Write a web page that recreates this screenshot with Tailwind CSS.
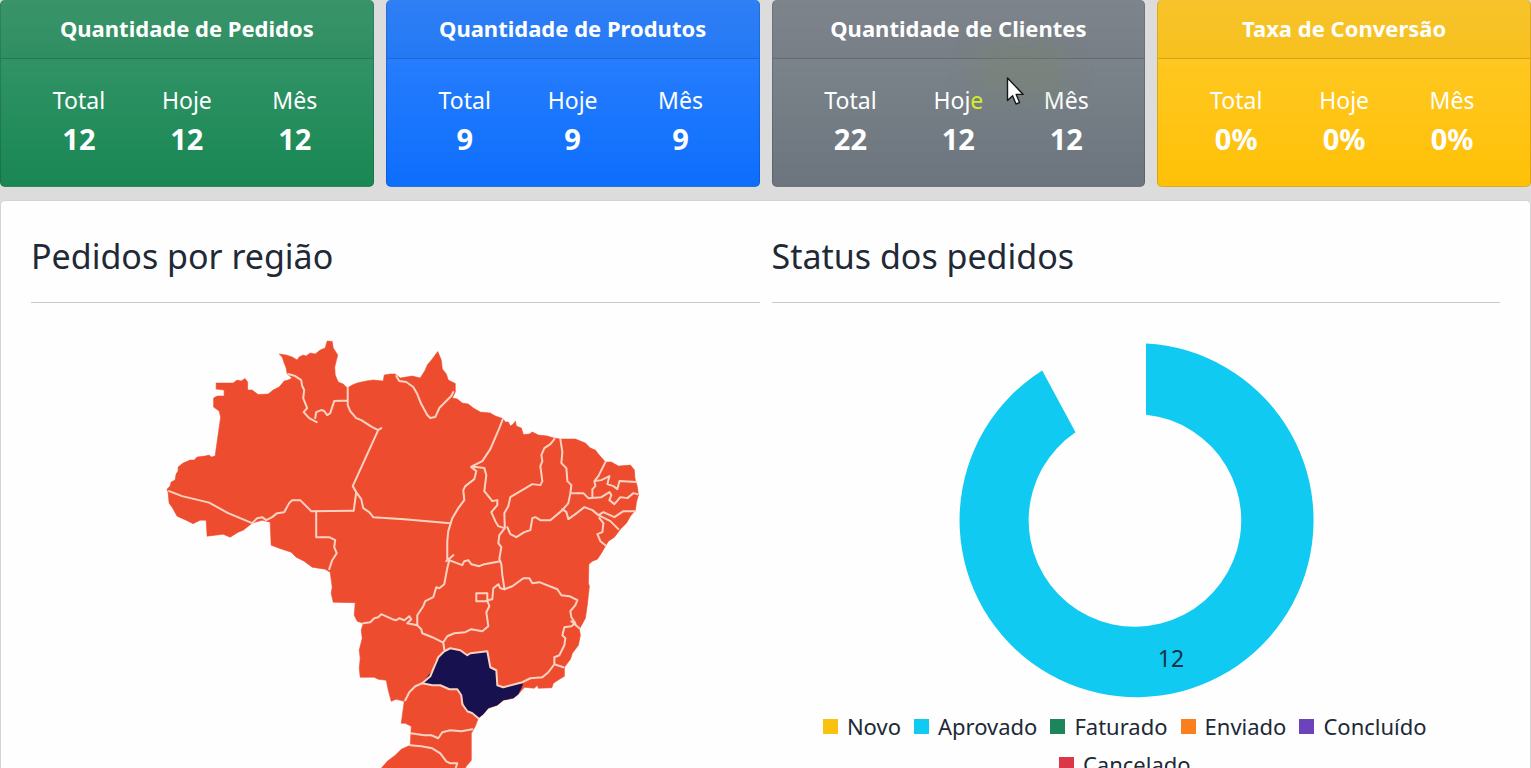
<!DOCTYPE html>
<html lang="pt-BR">
<head>
<meta charset="utf-8">
<title>Painel de pedidos</title>
<script src="https://cdn.jsdelivr.net/npm/@tailwindcss/browser@4"></script>
</head>
<body class="h-screen overflow-hidden bg-[#dcdcdd] font-['Noto_Sans',sans-serif] text-[#212936]">
<main class="relative">
  <section class="grid grid-cols-4 gap-3 text-white">
    <article class="h-[187px] rounded-[5px] border border-t-0 border-black/15 bg-[#198754] bg-linear-to-b from-white/15 to-transparent text-center">
      <h2 class="h-[59px] border-b border-black/15 bg-black/3 pt-3 text-[22px] leading-8 font-bold">Quantidade de Pedidos</h2>
      <dl class="grid grid-cols-3 px-6 pt-[25px]">
        <div><dt class="text-[23px] leading-8">Total</dt><dd class="text-[29px] leading-[46px] font-bold">12</dd></div>
        <div><dt class="text-[23px] leading-8">Hoje</dt><dd class="text-[29px] leading-[46px] font-bold">12</dd></div>
        <div><dt class="text-[23px] leading-8">Mês</dt><dd class="text-[29px] leading-[46px] font-bold">12</dd></div>
      </dl>
    </article>
    <article class="h-[187px] rounded-[5px] border border-t-0 border-black/15 bg-[#0d6efd] bg-linear-to-b from-white/15 to-transparent text-center">
      <h2 class="h-[59px] border-b border-black/15 bg-black/3 pt-3 text-[22px] leading-8 font-bold">Quantidade de Produtos</h2>
      <dl class="grid grid-cols-3 px-6 pt-[25px]">
        <div><dt class="text-[23px] leading-8">Total</dt><dd class="text-[29px] leading-[46px] font-bold">9</dd></div>
        <div><dt class="text-[23px] leading-8">Hoje</dt><dd class="text-[29px] leading-[46px] font-bold">9</dd></div>
        <div><dt class="text-[23px] leading-8">Mês</dt><dd class="text-[29px] leading-[46px] font-bold">9</dd></div>
      </dl>
    </article>
    <article class="relative h-[187px] rounded-[5px] border border-t-0 border-black/15 bg-[#6c757d] bg-linear-to-b from-white/15 to-transparent text-center">
      <div class="absolute top-11 left-[200px] h-14 w-24 rounded-full bg-[#7c8a50]/20 blur-md"></div>
      <h2 class="h-[59px] border-b border-black/15 bg-black/3 pt-3 text-[22px] leading-8 font-bold">Quantidade de Clientes</h2>
      <dl class="grid grid-cols-3 px-6 pt-[25px]">
        <div><dt class="text-[23px] leading-8">Total</dt><dd class="text-[29px] leading-[46px] font-bold">22</dd></div>
        <div><dt class="text-[23px] leading-8">Hoj<span class="text-[#d9f02a]">e</span></dt><dd class="text-[29px] leading-[46px] font-bold">12</dd></div>
        <div><dt class="text-[23px] leading-8">Mês</dt><dd class="text-[29px] leading-[46px] font-bold">12</dd></div>
      </dl>
      <svg class="absolute top-[76px] left-[233px] h-[30px] w-[19px]" viewBox="0 0 19 30" aria-hidden="true"><path d="M1.500 2V24.500L6.600 19.800L10 28L13.600 26.500L10.200 18.400H17.200Z" fill="#fff" stroke="#15181d" stroke-width="1.4" stroke-linejoin="round"/></svg>
    </article>
    <article class="h-[187px] rounded-[5px] border border-t-0 border-black/15 bg-[#ffc107] bg-linear-to-b from-white/15 to-transparent text-center">
      <h2 class="h-[59px] border-b border-black/15 bg-black/3 pt-3 text-[22px] leading-8 font-bold">Taxa de Conversão</h2>
      <dl class="grid grid-cols-3 px-6 pt-[25px]">
        <div><dt class="text-[23px] leading-8">Total</dt><dd class="text-[29px] leading-[46px] font-bold">0%</dd></div>
        <div><dt class="text-[23px] leading-8">Hoje</dt><dd class="text-[29px] leading-[46px] font-bold">0%</dd></div>
        <div><dt class="text-[23px] leading-8">Mês</dt><dd class="text-[29px] leading-[46px] font-bold">0%</dd></div>
      </dl>
    </article>
  </section>

  <section class="mt-[13px] grid grid-cols-2 gap-3 rounded-[5px] border border-[#d3d3d5] bg-[#fefefe] px-[30px] pt-8">
    <div>
      <h2 class="h-[70px] border-b border-[#c8c9cb] text-[34px] leading-[46px]">Pedidos por região</h2>
      <svg class="w-full" viewBox="31 303 728 600" role="img" aria-label="Mapa de pedidos por região">
        <path fill="#ee4c2e" stroke="#ee4c2e" stroke-width=".6" stroke-linejoin="round" d="M168 492L167 489 170 486 171 482 175 480 176 474 178 471 178 467 183 463 190 460 194 460 197 457 205 456 209 455 211 457 215 456 220.500 417 219 411 213.500 407 213.500 398 217 396 224 396 224 390 216 389 216 383 233 383 237 380 241 381 245 378.500 247.500 382 247.500 390 252 390 258 394.500 268 394 273 390 279 387 284 381 288 380 292 378 287 374 286 368 284 363 282 357 279 354 286 355 292 357 297 360 299 357 303 355 306 356 310 353 315 354 320 350 325 348 327 341 332 341.500 333 348 337.500 355 334.500 367 335 375 338 382 343 384 347 388 352 385 357 383 366 381 373 380 383 381 384 375 390 374 395 374 400 378 406 377 412 376 420 378 425 370 427 365 432 359 437.500 351.500 441 360 442 369 446 374 448 380 455 383.500 455 392 452 398 457 399 462 403 468 404 473 408 480 412 490 413 495 416 502.500 418.500 505 422 508 422 510 426 513 424 515 421 516 426 521 428 523 434.500 529 434 532 432 538 435 547 436 553.500 438 560 439 575 439 585 443 590 448 595 450 598 454 605 462 611 462 618 466 630 465 634 470 634.500 478 637 487 638 495 636 502 635 510 630 516 626 523 620 529 614 537 608 541 605 546 601 553 597 559 592 561 588.500 564 588 583 589 586 587 604 585 618 579 629 580 635 578 645 572 653 570 659 564 667 564 676 559 679 553 683 551.500 687.500 538 688 537 685 534 688 524 687 518 694 513 698 503 700 497 705 488 708 483 714 478 718 475 726 471 733 471 760 466 766 458 780 445 798 424 821 419 806 401 793 377 786 371 779 381 768 387 761 395 755 401 749 410 745 411 726 405 723 401 723 404 701 396 699 391 701 388 690 386 680 378 679 374 677 360 677 359 668 360 658 359 650 362 638 361 630 363 623 357 621 354 615 355 602.500 333 602 331 593 332 587 330 572 325 569 312 567 304 561 296 557 291 552 279 548 271 545 270 522 262 520 252 523 243 530 238 532 230 537 223 534 207 536 206 520 200 520 193 523.500 186 520 177 516 172 507 169 503Z"/>
        <path fill="#17114f" d="M450 648L460 650 467 655 470 653 487 651 490 667 496 670 497 685 502 688 509 685 523 683 521 688 518 694 513 698 503 700 497 705 488 708 483 714 478 718 465 710 462 698 457 689 449 689 440 686 422 683 432 670 435 661 440 655 444 651Z"/>
        <g fill="none" stroke="#fcd3c2" stroke-width="2" stroke-linejoin="round" stroke-linecap="round">
          <path d="M169 491L182 496 209 502.500 228 513 252 523 257 518 262 517 266 520 272 517 277 513 284 512 289 503 292 500 300 500 305 505 311 511 353 510.500"/>
          <path d="M288 374L295 376 301 380 302 386 304 390 303 398 307 408 303.500 412 309 418 316.500 422M315 418L316 412 321 410 324 411 327 415 330 413 334 401 347 400.500M347.500 388V405L350 411 356 418 361 420 372 427 378 430 381 428M377.500 431L352.500 486 356 492 353.500 510.500M356 492L361 499 363 508 369 512 373 517 404 519 450 523"/>
          <path d="M396 376L399 381 406 382 413 387 417 394 421 404 427 415 430 418 435 417 439 408 451 396 453 392"/>
          <path d="M502.500 419L499 428 496 435 490 449 482 461 471 466.500 484 468 486 475 484 491 492 501 497 500 497 505 491 512 495 521 498 526 504 528M471 467L476 471 474 479 465 486 463 490 464 500 458 508 452 518 448 531 447 541 447 559M453 555L446 561M449 560L454 562 462 565 464 561 468 560 471 564 479 566 484 564 500 561"/>
          <path d="M554 439L550 444 544 448 541 455 542 461 540 466 542 481 540 485 532 484 510 497 508 506 504 513 504.500 528 499 535 498 543 501 547 499 559 501 564 502 575 504 588M507 527L510 534 516 537 524 532 530 530 532 518 535 517 540 520 550 520 562 510 568 503 570 493M560 439L562 452 561 463 566 468 567 481 571 485 570 493 583 493 588 498 601 497 609 492 611 495 609 500 614 504 620 497 627 498 633 493 637 494"/>
          <path d="M605 462L602 468 598 476 594 481 595 486 592 489 592 497M594 481L601 480 609 476 607 484 613 486 617 489 619 481 636 482M562 509L566 512 568 519 575 514 584 507 592 510 598 515 603 512 614 517 623 511 635 511M598 515L610 521 618 529M599 518L603 523 602 532 597 534 600 541 605 545"/>
          <path d="M316 511V537H329L335 540 334 547 336.500 553 332 560 329 569M449 560L447 568 444 584 439 588 436 587 433 597 425 601 423 606 417 615 417 625 421 629 422 633 432 637 443 642.500 444 649M363 623L370 622 374 618 378 617 381 614 392 619 396 620 399 618 404 620 409 616 411 619 407 623 417 625M443 642L447 636 454 633 465 632 471 629 482 631 488 626 486 612 489 606 487 600 492 599 493 588 498 584 500 588 504 589"/>
          <path d="M476 593H487V601H476Z"/>
          <path d="M504 589L512 586 523 578 529 578 532 583 539 582 557 589 561 595 569 596 577 600 575 605 570 611 571 617 575 623 571 626 564 627 562 635 565 638 564 645 559 655 554 657 554 664 548 672 542 677 530 678 522 682 503 687 497 685 496 670 490 667 487 651 470 653 467 655 460 650 450 648 444 651 438 657 435 664 430 676 422 683M571 621L579 628M554 664L563 667"/>
          <path d="M405 700L409 692 415 686 422 683 432 685 440 685 449 689 457 689 461 695 462 704 467 711 472 713 478 718M410.500 733L424 735 431 735 438 738 442 732 450 730 461 731 472 729M410 745L421 746 432 748 440 753 446 761 450 763 457 763 455 769"/>
        </g>
      </svg>
    </div>
    <div>
      <h2 class="h-[70px] border-b border-[#c8c9cb] text-[34px] leading-[46px]">Status dos pedidos</h2>
      <svg class="mx-auto mt-10 h-[356px] w-[356px] font-['Noto_Sans',sans-serif]" viewBox="958 343 356 356" role="img" aria-label="Aprovado: 12">
        <path fill="#11caf2" d="M1146 343.500A177 177 0 1 1 1042.200 370.500L1075.500 432.300A106.300 106.300 0 1 0 1146 414.700Z"/>
        <text x="1171" y="667" text-anchor="middle" font-size="23" fill="#163344">12</text>
      </svg>
      <ul class="mt-[10px] flex flex-wrap justify-center gap-x-[13px] gap-y-1 pr-[62px] pl-10 text-[22px] leading-[34px]">
        <li class="flex items-center gap-[9px]"><span class="size-[15px] bg-[#f8c20f]"></span>Novo</li>
        <li class="flex items-center gap-[9px]"><span class="size-[15px] bg-[#11caf2]"></span>Aprovado</li>
        <li class="flex items-center gap-[9px]"><span class="size-[15px] bg-[#1c8559]"></span>Faturado</li>
        <li class="flex items-center gap-[9px]"><span class="size-[15px] bg-[#fb7f1c]"></span>Enviado</li>
        <li class="flex items-center gap-[9px]"><span class="size-[15px] bg-[#6c43bb]"></span>Concluído</li>
        <li class="flex items-center gap-[9px]"><span class="size-[15px] bg-[#dc3748]"></span>Cancelado</li>
      </ul>
    </div>
  </section>
</main>
</body>
</html>
